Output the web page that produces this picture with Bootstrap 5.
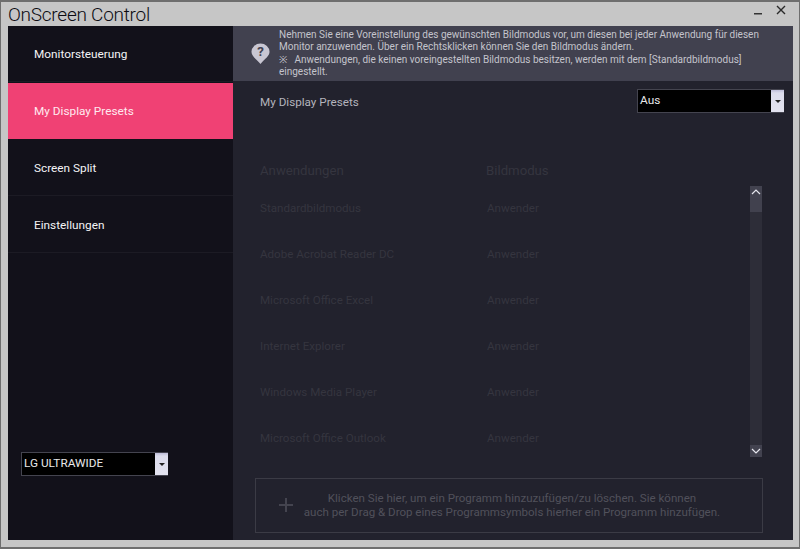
<!DOCTYPE html>
<html lang="de">
<head>
<meta charset="utf-8">
<title>OnScreen Control</title>
<link href="https://cdn.jsdelivr.net/npm/bootstrap@5.3.0/dist/css/bootstrap.min.css" rel="stylesheet">
<style>
html,body{height:100%;margin:0;overflow:hidden}
body{background:#c6c6c6;font-family:Roboto,"Liberation Sans",sans-serif;font-size:12px}
.osc-window{width:800px;height:549px;border:1px solid #6e6e6e;border-bottom:2px solid #6e6e6e;border-top:2px solid #6e6e6e;padding:0 6px 7px 7px}
.osc-title{height:24px;color:#0c0c12;font-size:19px;font-weight:300;line-height:25px;letter-spacing:-.25px}
.osc-winbtns{gap:13px;padding-right:7px;padding-top:3px;letter-spacing:0}
.osc-main{height:514px}
.osc-side{width:225px;background:#12111a}
.osc-item{height:56px;margin-bottom:1px;padding:3px 0 0 26px;color:#f4f4f6;font-size:11.8px;background:#12111a;border-bottom:1px solid #1c1b24}
.osc-item.active-item{background:#f04174;color:#ffe9ef;border-bottom-color:#f04174}
.osc-side-foot{padding:0 0 64px 13px}
.osc-select{width:147px;height:24px;background:#000;border:1px solid #44444f;color:#e8e8ea;font-size:11.8px;padding-left:2px}
.osc-select-btn{width:13px;height:22px;background:linear-gradient(#bdbcd8 0,#dcdcec 3px,#e3e3ef 100%);margin-right:-1px}
.osc-caret{width:0;height:0;border-left:3.5px solid transparent;border-right:3.5px solid transparent;border-top:3.5px solid #222}
.osc-content{background:#22222d;min-width:0}
.osc-info{height:55px;background:#41414f;color:#c4c4cc;font-size:10px;line-height:12.5px;padding-left:18px;gap:9px}
.osc-note{margin-right:5px}
.osc-presets{padding:8px 9px 0 27px;height:83px}
.osc-h{color:#b4b4bc;font-size:11.7px;margin-top:5px}
.osc-table{padding-left:27px;padding-right:31px;height:311px}
.osc-cols{color:#35353f}
.osc-name{width:226px}
.osc-thead{font-size:13.2px;height:27px;line-height:12px;padding-top:1px}
.osc-row{height:46px;font-size:11.6px;line-height:34px}
.osc-row .osc-name{width:227px}
.osc-scroll{width:12px;height:271px;margin-top:22px;background:#2d2d38}
.osc-scroll-btn{height:12px;background-color:#42424f}
.osc-scroll-thumb{height:14px;background:#41414e}
.osc-add{width:508px;height:55px;margin:3px 0 0 22px;border:1px solid #3b3b45;color:#51515b;font-size:11.55px;line-height:14.5px;padding:0 0 1px 22px}
.osc-add-text{width:436px}
</style>
</head>
<body>
<div class="osc-window d-flex flex-column">
  <div class="osc-title d-flex justify-content-between">
    <span>OnScreen Control</span>
    <div class="osc-winbtns d-flex align-items-start">
      <svg width="9" height="12" viewBox="0 0 9 12"><rect x="0" y="8" width="8" height="1.5" fill="#333"/></svg>
      <svg width="10" height="10" viewBox="0 0 10 10"><path d="M1 1l8 8M9 1l-8 8" stroke="#2a2a2a" stroke-width="1.4" fill="none"/></svg>
    </div>
  </div>
  <div class="osc-main d-flex">
    <div class="osc-side d-flex flex-column">
      <div class="osc-item d-flex align-items-center">Monitorsteuerung</div>
      <div class="osc-item active-item d-flex align-items-center">My Display Presets</div>
      <div class="osc-item d-flex align-items-center">Screen Split</div>
      <div class="osc-item d-flex align-items-center">Einstellungen</div>
      <div class="mt-auto osc-side-foot">
        <div class="osc-select d-flex justify-content-between align-items-center">
          <span>LG ULTRAWIDE</span>
          <span class="osc-select-btn d-flex align-items-center justify-content-center"><span class="osc-caret"></span></span>
        </div>
      </div>
    </div>
    <div class="osc-content flex-grow-1 d-flex flex-column">
      <div class="osc-info d-flex align-items-center">
        <svg width="19" height="22" viewBox="0 0 20 25" preserveAspectRatio="none" class="flex-shrink-0"><path d="M10 0.5a9.5 9.5 0 0 1 9.5 9.5c0 5-4.500 7.500-9.500 14c-5-6.500-9.500-9-9.500-14a9.500 9.500 0 0 1 9.500-9.500z" fill="#c8c6d2"/><text x="10" y="15" font-size="14" font-weight="700" text-anchor="middle" fill="#41414f" font-family="Roboto,sans-serif">?</text></svg>
        <div class="flex-grow-1">Nehmen Sie eine Voreinstellung des gewünschten Bildmodus vor, um diesen bei jeder Anwendung für diesen<br>Monitor anzuwenden. Über ein Rechtsklicken können Sie den Bildmodus ändern.<br><span class="osc-note">※</span> Anwendungen, die keinen voreingestellten Bildmodus besitzen, werden mit dem [Standardbildmodus]<br>eingestellt.</div>
      </div>
      <div class="osc-presets d-flex justify-content-between align-items-start">
        <div class="osc-h">My Display Presets</div>
        <div class="osc-select d-flex justify-content-between align-items-center">
          <span>Aus</span>
          <span class="osc-select-btn d-flex align-items-center justify-content-center"><span class="osc-caret"></span></span>
        </div>
      </div>
      <div class="osc-table d-flex justify-content-between">
        <div class="osc-cols">
          <div class="d-flex osc-thead"><div class="osc-name">Anwendungen</div><div>Bildmodus</div></div>
          <div class="d-flex osc-row"><div class="osc-name">Standardbildmodus</div><div>Anwender</div></div>
          <div class="d-flex osc-row"><div class="osc-name">Adobe Acrobat Reader DC</div><div>Anwender</div></div>
          <div class="d-flex osc-row"><div class="osc-name">Microsoft Office Excel</div><div>Anwender</div></div>
          <div class="d-flex osc-row"><div class="osc-name">Internet Explorer</div><div>Anwender</div></div>
          <div class="d-flex osc-row"><div class="osc-name">Windows Media Player</div><div>Anwender</div></div>
          <div class="d-flex osc-row"><div class="osc-name">Microsoft Office Outlook</div><div>Anwender</div></div>
        </div>
        <div class="osc-scroll d-flex flex-column">
          <div class="osc-scroll-btn d-flex align-items-center justify-content-center"><svg width="10" height="6" viewBox="0 0 10 6"><path d="M1 5l4-4 4 4" stroke="#e6e6ee" stroke-width="1.2" fill="none"/></svg></div>
          <div class="osc-scroll-thumb"></div>
          <div class="osc-scroll-btn d-flex align-items-center justify-content-center mt-auto"><svg width="10" height="6" viewBox="0 0 10 6"><path d="M1 1l4 4 4-4" stroke="#e6e6ee" stroke-width="1.2" fill="none"/></svg></div>
        </div>
      </div>
      <div class="osc-add d-flex align-items-center">
        <svg width="16" height="16" viewBox="0 0 16 16" class="flex-shrink-0"><path d="M8 1v14M1 8h14" stroke="#44444f" stroke-width="2" fill="none"/></svg>
        <div class="osc-add-text text-center">Klicken Sie hier, um ein Programm hinzuzufügen/zu löschen. Sie können<br>auch per Drag &amp; Drop eines Programmsymbols hierher ein Programm hinzufügen.</div>
      </div>
    </div>
  </div>
</div>
</body>
</html>
